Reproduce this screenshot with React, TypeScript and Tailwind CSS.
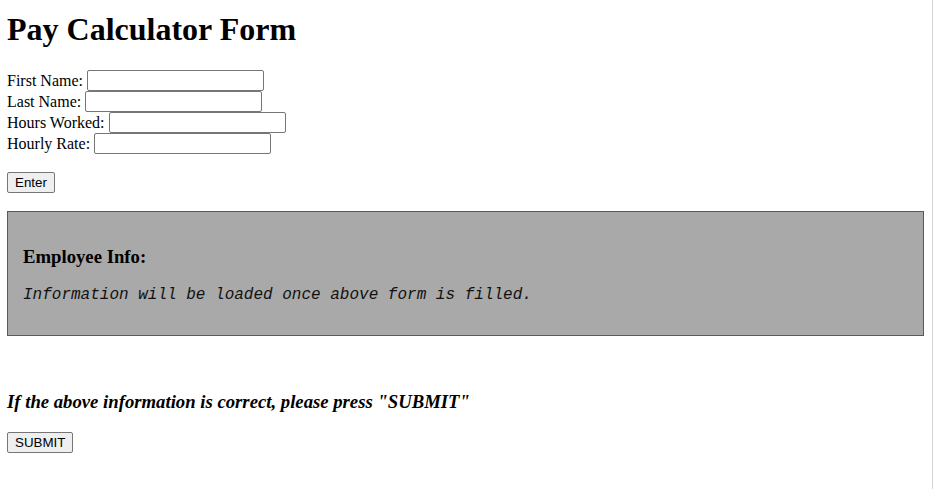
const fields = ['First Name:', 'Last Name:', 'Hours Worked:', 'Hourly Rate:']

const serif = "font-['Liberation_Serif','Times_New_Roman',serif]"

function FieldRow({ label }: { label: string }) {
  return (
    <div className="flex h-[21px] items-center gap-[4px] text-[16px] leading-[21px]">
      <label>{label}</label>
      <input
        type="text"
        className="h-[21px] w-[177px] rounded-[2px] border border-[#767676] bg-white px-[2px] font-['Liberation_Sans',Arial,sans-serif] text-[13.33px] outline-none"
      />
    </div>
  )
}

function NativeButton({ children }: { children: React.ReactNode }) {
  return (
    <button
      type="button"
      className="h-[21px] rounded-[2px] border border-[#767676] bg-[#efefef] px-[7px] font-['Liberation_Sans',Arial,sans-serif] text-[13.33px] leading-[17px] text-black"
    >
      {children}
    </button>
  )
}

export default function App() {
  return (
    <div
      className={`${serif} min-h-screen w-[933px] border-r border-[#d6d6d6] bg-white pl-[7px] pr-[8px] text-black`}
    >
      <h1 className="pt-[11px] text-[32px] font-bold leading-[37px]">Pay Calculator Form</h1>

      <form className="mt-[22px]" onSubmit={(e) => e.preventDefault()}>
        {fields.map((f) => (
          <FieldRow key={f} label={f} />
        ))}
        <div className="mt-[18px] flex">
          <NativeButton>Enter</NativeButton>
        </div>
      </form>

      <section className="mt-[18px] border border-[#5a5a5a] bg-[#a9a9a9] px-[15px] pt-[34px] pb-[31px]">
        <h3 className="text-[18.72px] font-bold leading-[21.5px]">Employee Info:</h3>
        <p className="mt-[18.5px] font-['Liberation_Mono','Courier_New',monospace] text-[16px] italic leading-[18px] text-[#111]">
          Information will be loaded once above form is filled.
        </p>
      </section>

      <h3 className="mt-[55px] text-[18.72px] font-bold italic leading-[21.5px]">
        If the above information is correct, please press "SUBMIT"
      </h3>
      <div className="mt-[19px] flex">
        <NativeButton>SUBMIT</NativeButton>
      </div>
    </div>
  )
}
